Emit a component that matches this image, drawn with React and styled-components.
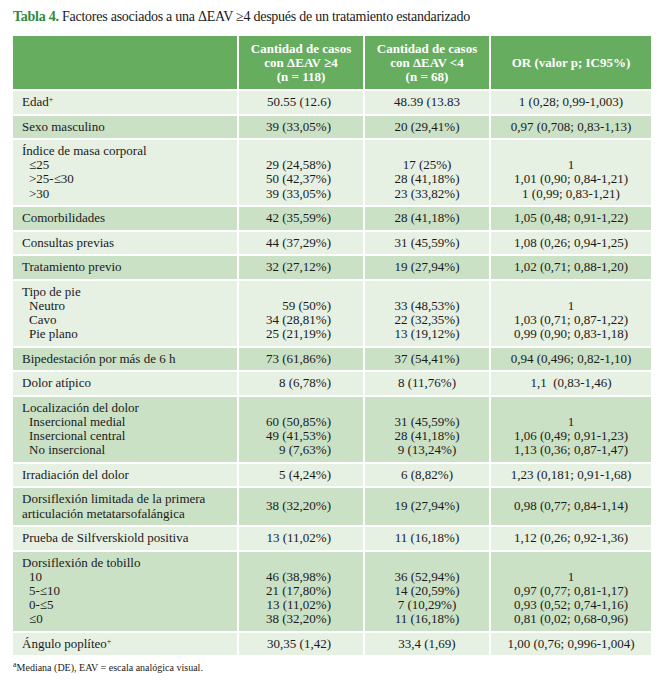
import styled, { createGlobalStyle } from "styled-components";

const GlobalStyle = createGlobalStyle`
  body {
    margin: 0;
    background: #fff;
    color: #1a1a1a;
  }
`;

const serif = `"Liberation Serif", Tinos, "Times New Roman", "DejaVu Serif", serif`;

const rows = [
  { label: ["Edad"], sup: "+", a: ["50.55 (12.6)"], b: ["48.39 (13.83"], c: ["1 (0,28; 0,99-1,003)"] },
  { label: ["Sexo masculino"], a: ["39 (33,05%)"], b: ["20 (29,41%)"], c: ["0,97 (0,708; 0,83-1,13)"] },
  {
    label: ["Índice de masa corporal"],
    subs: ["≤25", ">25-≤30", ">30"],
    a: ["29 (24,58%)", "50 (42,37%)", "39 (33,05%)"],
    b: ["17 (25%)", "28 (41,18%)", "23 (33,82%)"],
    c: ["1", "1,01 (0,90; 0,84-1,21)", "1 (0,99; 0,83-1,21)"],
  },
  { label: ["Comorbilidades"], a: ["42 (35,59%)"], b: ["28 (41,18%)"], c: ["1,05 (0,48; 0,91-1,22)"] },
  { label: ["Consultas previas"], a: ["44 (37,29%)"], b: ["31 (45,59%)"], c: ["1,08 (0,26; 0,94-1,25)"] },
  { label: ["Tratamiento previo"], a: ["32 (27,12%)"], b: ["19 (27,94%)"], c: ["1,02 (0,71; 0,88-1,20)"] },
  {
    label: ["Tipo de pie"],
    subs: ["Neutro", "Cavo", "Pie plano"],
    a: ["59 (50%)", "34 (28,81%)", "25 (21,19%)"],
    b: ["33 (48,53%)", "22 (32,35%)", "13 (19,12%)"],
    c: ["1", "1,03 (0,71; 0,87-1,22)", "0,99 (0,90; 0,83-1,18)"],
  },
  { label: ["Bipedestación por más de 6 h"], a: ["73 (61,86%)"], b: ["37 (54,41%)"], c: ["0,94 (0,496; 0,82-1,10)"] },
  { label: ["Dolor atípico"], a: ["8 (6,78%)"], b: ["8 (11,76%)"], c: ["1,1  (0,83-1,46)"] },
  {
    label: ["Localización del dolor"],
    subs: ["Insercional medial", "Insercional central", "No insercional"],
    a: ["60 (50,85%)", "49 (41,53%)", "9 (7,63%)"],
    b: ["31 (45,59%)", "28 (41,18%)", "9 (13,24%)"],
    c: ["1", "1,06 (0,49; 0,91-1,23)", "1,13 (0,36; 0,87-1,47)"],
  },
  { label: ["Irradiación del dolor"], a: ["5 (4,24%)"], b: ["6 (8,82%)"], c: ["1,23 (0,181; 0,91-1,68)"] },
  {
    label: ["Dorsiflexión limitada de la primera", "articulación metatarsofalángica"],
    a: ["38 (32,20%)"],
    b: ["19 (27,94%)"],
    c: ["0,98 (0,77; 0,84-1,14)"],
  },
  { label: ["Prueba de Silfverskiold positiva"], a: ["13 (11,02%)"], b: ["11 (16,18%)"], c: ["1,12 (0,26; 0,92-1,36)"] },
  {
    label: ["Dorsiflexión de tobillo"],
    subs: ["10", "5-≤10", "0-≤5", "≤0"],
    a: ["46 (38,98%)", "21 (17,80%)", "13 (11,02%)", "38 (32,20%)"],
    b: ["36 (52,94%)", "14 (20,59%)", "7 (10,29%)", "11 (16,18%)"],
    c: ["1", "0,97 (0,77; 0,81-1,17)", "0,93 (0,52; 0,74-1,16)", "0,81 (0,02; 0,68-0,96)"],
  },
  { label: ["Ángulo poplíteo"], sup: "+", a: ["30,35 (1,42)"], b: ["33,4 (1,69)"], c: ["1,00 (0,76; 0,996-1,004)"] },
];

const Values = ({ lines, hasSubs }) => (
  <>
    {hasSubs && <Line />}
    {lines.map((l, i) => (
      <Line key={i}>{l}</Line>
    ))}
  </>
);

const App = () => {
  return (
    <Page>
      <GlobalStyle />
      <Title>
        <TitleTag>Tabla 4.</TitleTag> Factores asociados a una ΔEAV ≥4 después de un tratamiento estandarizado
      </Title>
      <Table>
        <colgroup>
          <col style={{ width: 224 }} />
          <col style={{ width: 124 }} />
          <col style={{ width: 124 }} />
          <col style={{ width: 160 }} />
        </colgroup>
        <thead>
          <tr>
            <HeadCell />
            <HeadCell>
              Cantidad de casos
              <br />
              con ΔEAV ≥4
              <br />
              (n = 118)
            </HeadCell>
            <HeadCell>
              Cantidad de casos
              <br />
              con ΔEAV &lt;4
              <br />
              (n = 68)
            </HeadCell>
            <HeadCell>OR (valor p; IC95%)</HeadCell>
          </tr>
        </thead>
        <tbody>
          {rows.map((r, i) => {
            const hasSubs = !!r.subs;
            const dark = i % 2 === 1;
            return (
              <tr key={i}>
                <LabelCell $dark={dark}>
                  {r.label.map((l, j) => (
                    <Line key={j}>
                      {l}
                      {r.sup && j === 0 && <Sup>{r.sup}</Sup>}
                    </Line>
                  ))}
                  {hasSubs && r.subs.map((s, j) => <SubLine key={j}>{s}</SubLine>)}
                </LabelCell>
                <CountCell $dark={dark}>
                  <Values lines={r.a} hasSubs={hasSubs} />
                </CountCell>
                <Cell $dark={dark}>
                  <Values lines={r.b} hasSubs={hasSubs} />
                </Cell>
                <Cell $dark={dark}>
                  <Values lines={r.c} hasSubs={hasSubs} />
                </Cell>
              </tr>
            );
          })}
        </tbody>
      </Table>
      <Footnote>
        <Sup>a</Sup>Mediana (DE), EAV = escala analógica visual.
      </Footnote>
    </Page>
  );
};

const Page = styled.div`
  padding: 8px 0 0 13px;
  width: 640px;
  font-family: ${serif};
`;

const Title = styled.div`
  font-family: ${serif};
  font-size: 14px;
  line-height: 17px;
  color: #1a1a1a;
  letter-spacing: -0.25px;
  margin-bottom: 9px;
`;

const TitleTag = styled.span`
  color: #2f8a3c;
  font-weight: bold;
`;

const Table = styled.table`
  border-collapse: separate;
  border-spacing: 2px;
  margin: 0 0 0 -2px;
  table-layout: fixed;
  width: 642px;
  font-family: ${serif};
  font-size: 13px;
  color: #1a1a1a;
`;

const HeadCell = styled.th`
  background: #66ad5f;
  color: #fff;
  font-family: ${serif};
  font-weight: bold;
  font-size: 13px;
  line-height: 14px;
  height: 53px;
  padding: 0 4px;
  text-align: center;
  vertical-align: middle;
  box-sizing: border-box;
`;

const Cell = styled.td`
  background: ${({ $dark }) => ($dark ? "#cbe1c6" : "#e6f0e3")};
  font-family: ${serif};
  padding: 4px 6px 4.3px;
  line-height: 14.2px;
  text-align: center;
  vertical-align: middle;
  white-space: nowrap;
`;

const LabelCell = styled(Cell)`
  text-align: left;
  padding-left: 9px;
`;

const CountCell = styled(Cell)`
  text-align: right;
  padding-right: 32px;
`;

const Line = styled.div`
  min-height: 14.2px;
  white-space: pre;
`;

const SubLine = styled(Line)`
  padding-left: 7px;
`;

const Sup = styled.sup`
  font-size: 8px;
  line-height: 0;
  vertical-align: 4px;
`;

const Footnote = styled.div`
  font-family: ${serif};
  font-size: 10px;
  margin-top: 5px;
  color: #1a1a1a;
`;

export default App;
